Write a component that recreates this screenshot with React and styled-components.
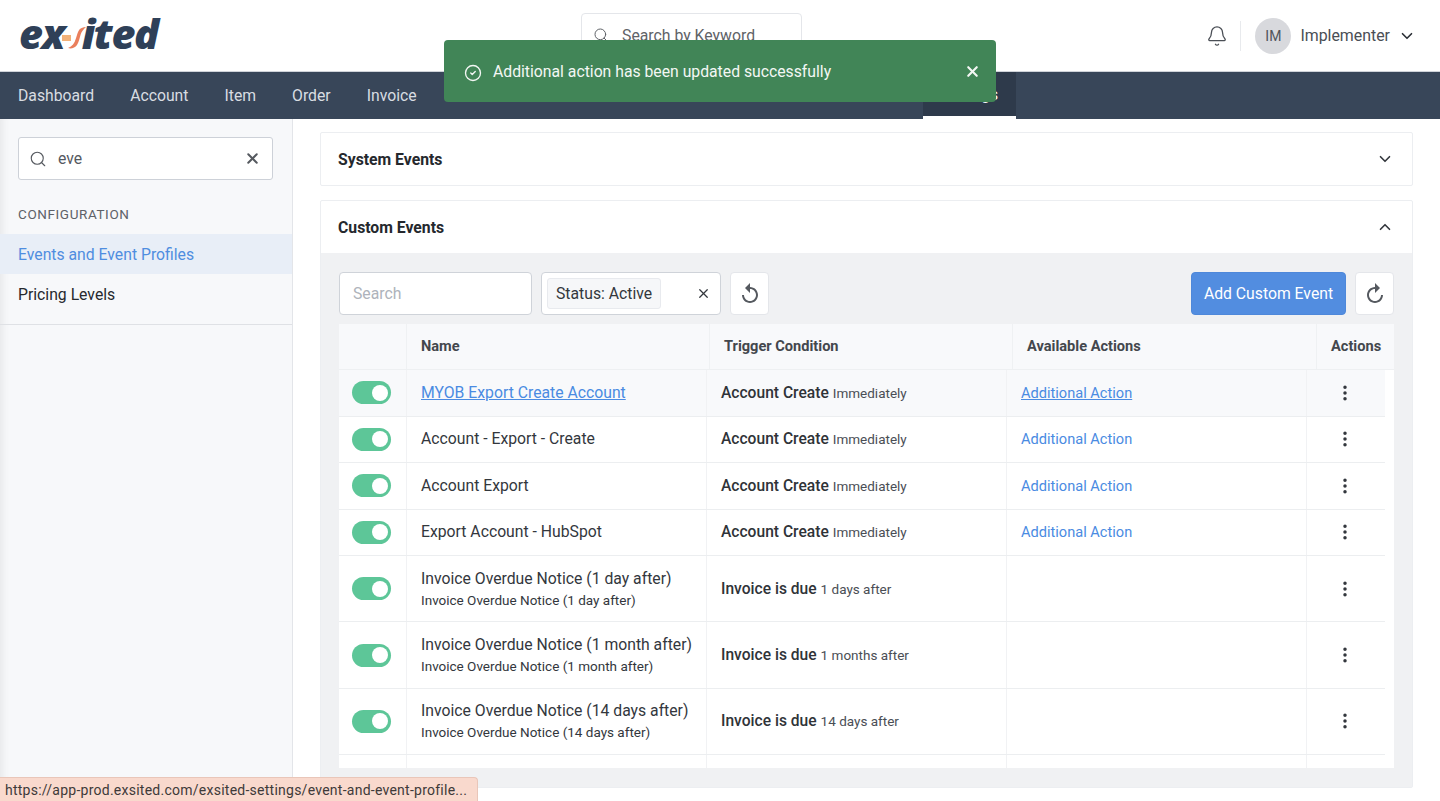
import React from 'react'
import styled, { createGlobalStyle } from 'styled-components'
import { Search, X, Bell, ChevronDown, ChevronUp, CircleCheck, EllipsisVertical } from 'lucide-react'

const GlobalStyle = createGlobalStyle`
  html, body {
    margin: 0;
    height: 801px;
    overflow: hidden;
    background: #fff;
    font-family: Roboto, 'Liberation Sans', sans-serif;
    color: #2b2f36;
  }
  * { box-sizing: border-box; }
`

const Page = styled.div`
  position: relative;
  width: 1440px;
  height: 801px;
  overflow: hidden;
`

const TopBar = styled.header`
  height: 71px;
  display: flex;
  align-items: center;
  padding: 0 24px 0 19px;
  background: #fff;
`

const Logo = styled.div`
  width: 142px;
  height: 44px;
  margin-top: -5px;
  display: flex;
  align-items: center;
  color: #2f4058;
  font-family: 'Open Sans', sans-serif;
  font-size: 41.5px;
  font-weight: 800;
  font-style: italic;
  letter-spacing: -1.4px;
  line-height: 44px;
  white-space: nowrap;
`

const LogoMark = styled.svg`
  width: 26px;
  height: 24px;
  margin: 9px -5px 0 -3px;
  flex-shrink: 0;
`

const GlobalSearch = styled.div`
  width: 221px;
  height: 44px;
  margin: 13px 0 0 420px;
  padding-left: 11px;
  display: flex;
  align-items: center;
  gap: 13px;
  border: 1px solid #e4e6ea;
  border-radius: 4px;
  color: #5f6368;
  font-size: 15.8px;
  align-self: flex-start;
`

const UserArea = styled.div`
  margin-left: auto;
  display: flex;
  align-items: center;
  color: #4a4e55;
`

const Divider = styled.span`
  width: 1px;
  height: 30px;
  margin: 0 14px 0 12px;
  background: #e8eaed;
`

const Avatar = styled.span`
  width: 36px;
  height: 36px;
  display: flex;
  align-items: center;
  justify-content: center;
  border-radius: 50%;
  background: #d8d9dd;
  color: #50545b;
  font-size: 14px;
`

const UserName = styled.span`
  margin: 0 8px 0 9px;
  font-size: 15.9px;
`

const Nav = styled.nav`
  height: 48px;
  display: flex;
  background: #384659;
  border-top: 1px solid #cfd3d9;
`

const NavItem = styled.a`
  height: 47px;
  padding: 0 18px;
  display: flex;
  align-items: center;
  color: #d9dde2;
  font-size: 15.75px;
  margin-left: ${(p) => p.$offset || 0}px;
  ${(p) => p.$active && 'background: #2e3a4b; border-bottom: 3px solid #fff; color: #fff;'}
`

const Body = styled.div`
  display: flex;
  height: 682px;
`

const Sidebar = styled.aside`
  width: 293px;
  flex-shrink: 0;
  background: #f7f8fa;
  border-right: 1px solid #e3e5e9;
  box-shadow: inset 10px 0 8px -8px rgba(0, 0, 0, 0.08);
`

const SideTop = styled.div`
  height: 206px;
  padding-top: 18px;
  border-bottom: 1px solid #dfe1e5;
`

const SideSearch = styled.div`
  width: 255px;
  height: 43px;
  margin-left: 18px;
  padding: 0 11px 0 10px;
  display: flex;
  align-items: center;
  gap: 11px;
  background: #fff;
  border: 1px solid #cdd1d8;
  border-radius: 3px;
  color: #55595f;
  font-size: 15.75px;
`

const SideValue = styled.span`
  flex: 1;
`

const SideLabel = styled.div`
  margin: 26px 0 12px 18px;
  color: #5d6168;
  font-size: 13.5px;
  line-height: 16px;
  letter-spacing: 0.6px;
`

const SideItem = styled.a`
  height: 40px;
  padding-left: 18px;
  display: flex;
  align-items: center;
  font-size: 15.75px;
  color: ${(p) => (p.$active ? '#4f8de0' : '#26292e')};
  background: ${(p) => (p.$active ? '#e8eef7' : 'transparent')};
`

const Main = styled.main`
  flex: 1;
  padding: 13px 27px 0;
`

const Panel = styled.section`
  border: 1px solid #eceef1;
  border-radius: 2px;
  background: #fff;
  margin-bottom: 14px;
`

const PanelHead = styled.div`
  height: 52px;
  padding: 0 18px 0 17px;
  display: flex;
  align-items: center;
  justify-content: space-between;
  color: #25282d;
  font-size: 15.75px;
  font-weight: 700;
  svg { color: #33373d; }
`

const PanelBody = styled.div`
  height: 534px;
  padding: 19px 18px 0;
  background: #f0f1f3;
`

const Toolbar = styled.div`
  height: 43px;
  display: flex;
  gap: 9px;
`

const Field = styled.div`
  height: 43px;
  display: flex;
  align-items: center;
  background: #fff;
  border: 1px solid #cfd3d9;
  border-radius: 4px;
  font-size: 15.75px;
`

const SearchField = styled(Field)`
  width: 193px;
  padding-left: 13px;
  color: #aeb3bb;
`

const StatusField = styled(Field)`
  width: 180px;
  padding: 0 9px 0 5px;
  justify-content: space-between;
  color: #33373d;
`

const Chip = styled.span`
  height: 31px;
  padding: 0 8px;
  display: flex;
  align-items: center;
  background: #f6f7f9;
  border: 1px solid #e8eaee;
  border-radius: 3px;
`

const IconButton = styled.button`
  width: 39px;
  height: 43px;
  padding: 0;
  display: flex;
  align-items: center;
  justify-content: center;
  background: #fff;
  border: 1px solid #e4e6ea;
  border-radius: 4px;
  color: #55595f;
`

const AddButton = styled.button`
  width: 155px;
  height: 43px;
  margin-left: auto;
  padding: 0;
  background: #528de0;
  border: 1px solid #4e88da;
  border-radius: 4px;
  color: #fff;
  font-family: inherit;
  font-size: 15.75px;
`

const Table = styled.div`
  width: 1055px;
  height: 444px;
  margin-top: 9px;
  background: #fff;
  overflow: hidden;
`

const HeadRow = styled.div`
  height: 46px;
  display: grid;
  grid-template-columns: 68px 303px 303px 304px 77px;
  background: #f8f9fb;
  border-bottom: 1px solid #eef0f2;
`

const HeadCell = styled.div`
  padding: 0 0 2px 14px;
  display: flex;
  align-items: center;
  border-right: 1px solid #eff1f3;
  color: #43474d;
  font-size: 14.6px;
  font-weight: 700;
  &:last-child { border-right: 0; }
`

const Row = styled.div`
  width: 1046px;
  height: ${(p) => (p.$tall ? 66.4 : 46.5)}px;
  display: grid;
  grid-template-columns: 68px 300px 300px 300px 78px;
  background: ${(p) => (p.$hover ? '#f8f9fb' : '#fff')};
  border-bottom: 1px solid #eceef0;
`

const Filler = styled(Row)`
  height: 14px;
  border-bottom: 0;
`

const Cell = styled.div`
  display: flex;
  flex-direction: column;
  justify-content: center;
  padding-left: 14px;
  border-right: 1px solid #f1f2f4;
  &:last-child { border-right: 0; }
`

const ToggleCell = styled(Cell)`
  padding-left: 13px;
`

const ToggleTrack = styled.span`
  width: 39px;
  height: 23px;
  padding-right: 3px;
  display: flex;
  align-items: center;
  justify-content: flex-end;
  background: #5dc698;
  border-radius: 12px;
`

const ToggleKnob = styled.span`
  width: 16px;
  height: 16px;
  background: #fff;
  border-radius: 50%;
`

const Name = styled.div`
  color: ${(p) => (p.$link ? '#4a8be2' : '#33373d')};
  font-size: 15.75px;
  line-height: 22px;
  text-decoration: ${(p) => (p.$link ? 'underline' : 'none')};
`

const Sub = styled.div`
  color: #33373d;
  font-size: 13.5px;
  line-height: 20px;
`

const Trigger = styled.div`
  color: #2f3338;
  font-size: 15.6px;
  font-weight: 500;
`

const TriggerNote = styled.span`
  margin-left: 4px;
  color: #4a4e55;
  font-size: 13.5px;
  font-weight: 400;
`

const ActionLink = styled.a`
  color: #4a8be2;
  font-size: 14.6px;
  text-decoration: ${(p) => (p.$under ? 'underline' : 'none')};
`

const MenuCell = styled(Cell)`
  align-items: center;
  padding: 0 2px 0 0;
  color: #33373d;
`

const Toast = styled.div`
  position: absolute;
  top: 40px;
  left: 444px;
  width: 552px;
  height: 62px;
  padding: 0 15px 0 20px;
  display: flex;
  align-items: center;
  gap: 11px;
  background: #418557;
  border-radius: 4px;
  color: #f3f7f4;
  font-size: 15.75px;
`

const ToastIcon = styled(CircleCheck)`
  margin-top: 3px;
`

const ToastText = styled.span`
  flex: 1;
`

const StatusBubble = styled.div`
  position: absolute;
  left: 0;
  bottom: 0;
  width: 478px;
  height: 24px;
  padding: 0 0 0 5px;
  display: flex;
  align-items: center;
  background: #f9d9cd;
  border: 1px solid #e9c6b9;
  border-left: 0;
  border-bottom: 0;
  border-radius: 0 4px 0 0;
  color: #3e3a39;
  font-size: 14px;
  letter-spacing: 0.25px;
  white-space: nowrap;
`

const ReloadIcon = ({ flip }) => (
  <svg width="24" height="24" viewBox="0 0 24 24" fill="currentColor" style={flip ? { transform: 'scaleX(-1)' } : undefined}>
    <path d="M12 5V1L7 6l5 5V7c3.31 0 6 2.69 6 6s-2.69 6-6 6-6-2.69-6-6H4c0 4.42 3.58 8 8 8s8-3.58 8-8-3.58-8-8-8z" />
  </svg>
)

const events = [
  { name: 'MYOB Export Create Account', cond: 'Account Create', note: 'Immediately', action: true, hover: true },
  { name: 'Account - Export - Create', cond: 'Account Create', note: 'Immediately', action: true },
  { name: 'Account Export', cond: 'Account Create', note: 'Immediately', action: true },
  { name: 'Export Account - HubSpot', cond: 'Account Create', note: 'Immediately', action: true },
  { name: 'Invoice Overdue Notice (1 day after)', sub: true, cond: 'Invoice is due', note: '1 days after' },
  { name: 'Invoice Overdue Notice (1 month after)', sub: true, cond: 'Invoice is due', note: '1 months after' },
  { name: 'Invoice Overdue Notice (14 days after)', sub: true, cond: 'Invoice is due', note: '14 days after' },
]

export default function App() {
  return (
    <Page>
      <GlobalStyle />
      <TopBar>
        <Logo>
          ex
          <LogoMark viewBox="0 0 26 24">
            <rect x="1" y="9" width="9" height="6" fill="#f2b27a" />
            <path d="M25 1c-3 0-6 1-7.500 4-1.500 3-2 6-3.500 10-1 2.500-2.500 5-7 7 3 1 7 0 9-3 2-3 2.500-7 3.500-10 .8-3 3-6 5.500-8z" fill="#ea7f5c" />
          </LogoMark>
          ited
        </Logo>
        <GlobalSearch>
          <Search size={16} strokeWidth={1.5} />
          Search by Keyword
        </GlobalSearch>
        <UserArea>
          <Bell size={22} strokeWidth={1.4} />
          <Divider />
          <Avatar>IM</Avatar>
          <UserName>Implementer</UserName>
          <ChevronDown size={18} strokeWidth={2.2} color="#2b2f36" />
        </UserArea>
      </TopBar>
      <Nav>
        <NavItem>Dashboard</NavItem>
        <NavItem>Account</NavItem>
        <NavItem>Item</NavItem>
        <NavItem>Order</NavItem>
        <NavItem>Invoice</NavItem>
        <NavItem $active $offset={488}>Settings</NavItem>
      </Nav>
      <Body>
        <Sidebar>
          <SideTop>
            <SideSearch>
              <Search size={18} strokeWidth={1.5} />
              <SideValue>eve</SideValue>
              <X size={17} strokeWidth={2.8} />
            </SideSearch>
            <SideLabel>CONFIGURATION</SideLabel>
            <SideItem $active>Events and Event Profiles</SideItem>
            <SideItem>Pricing Levels</SideItem>
          </SideTop>
        </Sidebar>
        <Main>
          <Panel>
            <PanelHead>
              System Events
              <ChevronDown size={18} strokeWidth={2.2} />
            </PanelHead>
          </Panel>
          <Panel>
            <PanelHead>
              Custom Events
              <ChevronUp size={18} strokeWidth={2.2} />
            </PanelHead>
            <PanelBody>
              <Toolbar>
                <SearchField>Search</SearchField>
                <StatusField>
                  <Chip>Status: Active</Chip>
                  <X size={15} strokeWidth={2} />
                </StatusField>
                <IconButton><ReloadIcon /></IconButton>
                <AddButton>Add Custom Event</AddButton>
                <IconButton><ReloadIcon flip /></IconButton>
              </Toolbar>
              <Table>
                <HeadRow>
                  <HeadCell />
                  <HeadCell>Name</HeadCell>
                  <HeadCell>Trigger Condition</HeadCell>
                  <HeadCell>Available Actions</HeadCell>
                  <HeadCell>Actions</HeadCell>
                </HeadRow>
                {events.map((ev) => (
                  <Row key={ev.name} $tall={ev.sub} $hover={ev.hover}>
                    <ToggleCell>
                      <ToggleTrack><ToggleKnob /></ToggleTrack>
                    </ToggleCell>
                    <Cell>
                      <Name $link={ev.hover}>{ev.name}</Name>
                      {ev.sub && <Sub>{ev.name}</Sub>}
                    </Cell>
                    <Cell>
                      <Trigger>
                        {ev.cond}
                        <TriggerNote>{ev.note}</TriggerNote>
                      </Trigger>
                    </Cell>
                    <Cell>
                      {ev.action && <ActionLink $under={ev.hover}>Additional Action</ActionLink>}
                    </Cell>
                    <MenuCell>
                      <EllipsisVertical size={20} strokeWidth={2.2} />
                    </MenuCell>
                  </Row>
                ))}
                <Filler>
                  <Cell /><Cell /><Cell /><Cell /><Cell />
                </Filler>
              </Table>
            </PanelBody>
          </Panel>
        </Main>
      </Body>
      <Toast>
        <ToastIcon size={18} strokeWidth={1.8} />
        <ToastText>Additional action has been updated successfully</ToastText>
        <X size={17} strokeWidth={3} />
      </Toast>
      <StatusBubble>https://app-prod.exsited.com/exsited-settings/event-and-event-profile...</StatusBubble>
    </Page>
  )
}
